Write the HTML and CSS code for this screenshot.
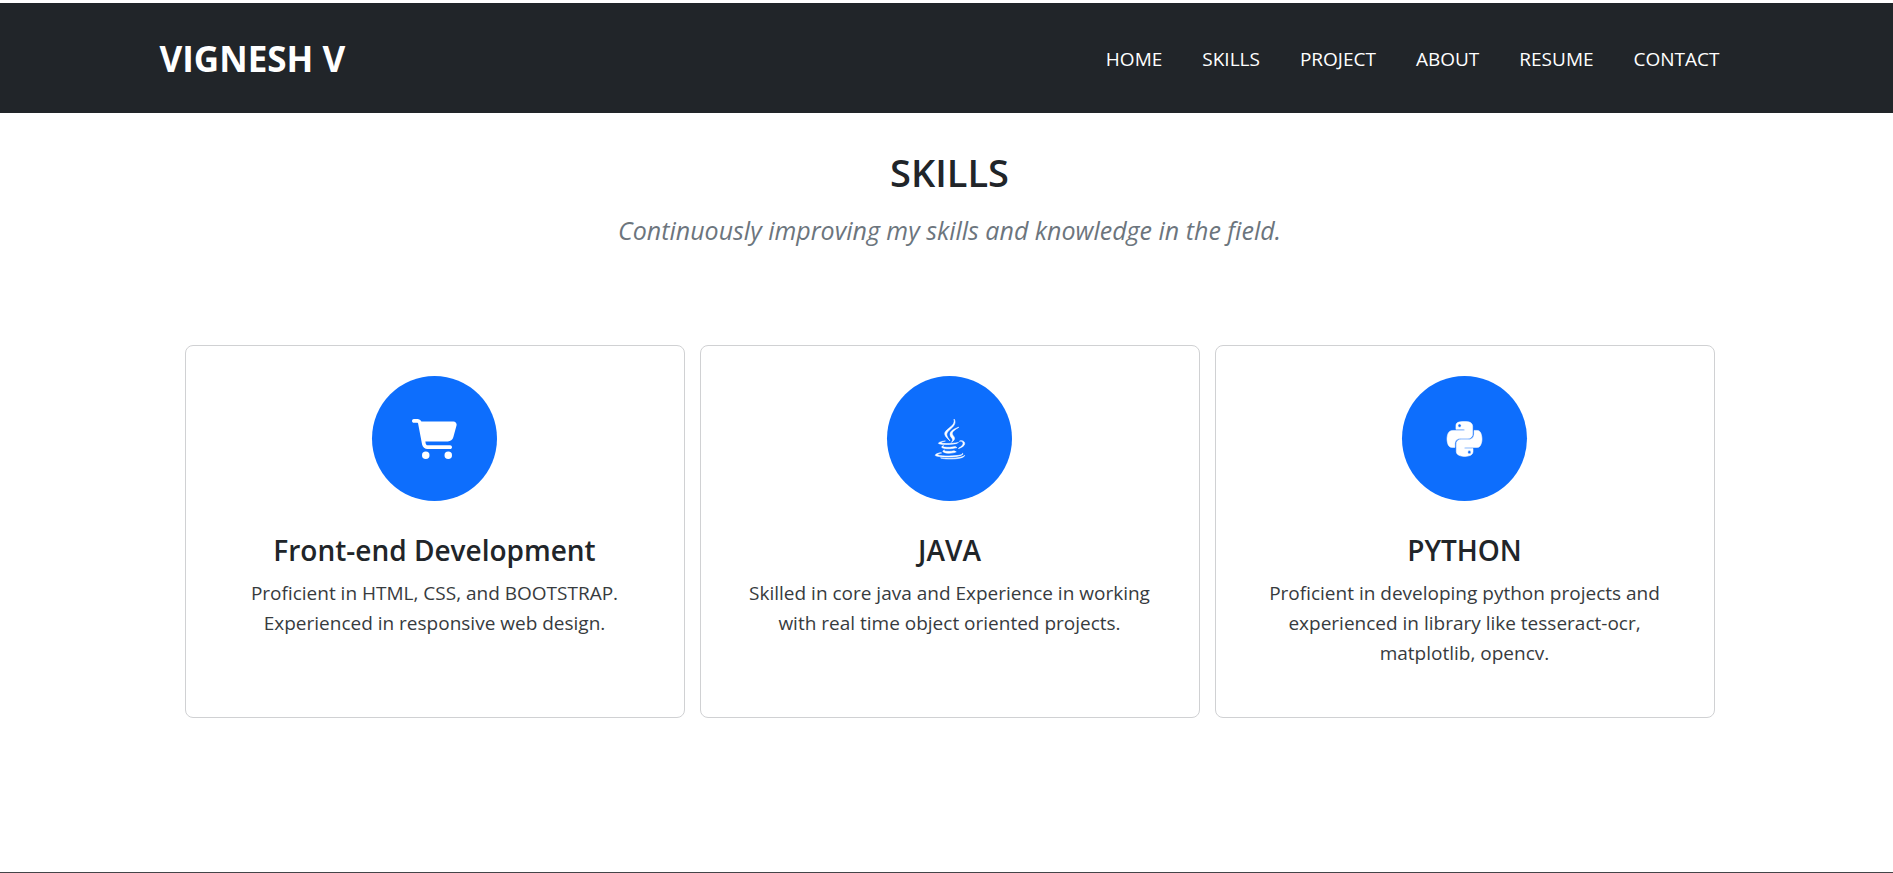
FILE: index.html
```html
<!DOCTYPE html>
<html lang="en">
<head>
  <meta charset="utf-8">
  <meta name="viewport" content="width=device-width, initial-scale=1">
  <title>Vignesh V</title>
  <link rel="stylesheet" href="styles.css">
</head>
<body>
  <header class="site-header">
    <div class="header-inner">
      <a class="brand" href="#home">VIGNESH V</a>
      <nav class="nav" aria-label="Main">
        <a href="#home">HOME</a>
        <a href="#skills">SKILLS</a>
        <a href="#project">PROJECT</a>
        <a href="#about">ABOUT</a>
        <a href="#resume">RESUME</a>
        <a href="#contact">CONTACT</a>
      </nav>
    </div>
  </header>
  <main class="skills" id="skills">
    <h1 class="skills-title">SKILLS</h1>
    <p class="skills-lead">Continuously improving my skills and knowledge in the field.</p>
    <div class="cards">
      <article class="card">
        <div class="badge">
          <svg class="icon" viewBox="0 0 576 512" aria-hidden="true"><path d="M0 24C0 10.700 10.700 0 24 0H69.500c22 0 41.500 12.800 50.600 32h411c26.300 0 45.500 25 38.600 50.400l-41 152.300c-8.500 31.400-37 53.300-69.500 53.300H170.700l5.400 28.500c2.200 11.300 12.100 19.500 23.600 19.500H488c13.300 0 24 10.700 24 24s-10.700 24-24 24H199.700c-34.600 0-64.300-24.600-70.700-58.500L77.400 54.500c-.7-3.800-4-6.500-7.900-6.500H24C10.700 48 0 37.300 0 24zM128 464a48 48 0 1 1 96 0 48 48 0 1 1-96 0zm336-48a48 48 0 1 1 0 96 48 48 0 1 1 0-96z"/></svg>
        </div>
        <h2 class="card-title">Front-end Development</h2>
        <p class="card-text">Proficient in HTML, CSS, and BOOTSTRAP. Experienced in responsive web design.</p>
      </article>
      <article class="card">
        <div class="badge">
          <svg class="icon icon-bold" viewBox="0 0 384 512" aria-hidden="true"><path d="M277.740 312.900c9.800-6.700 23.400-12.500 23.400-12.500s-38.700 7-77.200 10.200c-47.100 3.900-97.700 4.700-123.100 1.300-60.100-8 33-30.100 33-30.100s-36.100-2.400-80.600 19c-52.500 25.400 130 37 224.500 12.100zm-85.400-32.100c-19-42.700-83.100-80.200 0-145.800C296 53.200 242.840 0 242.840 0c21.500 84.500-75.600 110.100-110.700 162.600-23.900 35.900 11.700 74.400 60.200 118.200zm114.600-176.200c.1 0-175.200 43.800-91.500 140.200 24.700 28.400-6.500 54-6.500 54s62.700-32.400 33.900-72.900c-26.900-37.800-47.500-56.600 64.100-121.300zm-6.100 270.500a12.190 12.190 0 0 1-2 2.600c128.300-33.700 81.100-118.900 19.800-97.300a17.330 17.330 0 0 0-8.200 6.300 70.450 70.450 0 0 1 11-3c31-6.500 75.500 41.500-20.600 91.400zM348 437.400s14.500 11.900-15.900 21.200c-57.900 17.500-240.800 22.800-291.600.7-18.300-7.900 16-19 26.800-21.300 11.200-2.400 17.700-2 17.700-2-20.300-14.300-131.300 28.100-56.400 40.200C232.840 509.400 401 461.300 348 437.400zM124.440 396c-78.700 22 47.900 67.400 148.100 24.500a185.890 185.890 0 0 1-28.200-13.800c-44.700 8.500-65.400 9.100-106 4.500-33.500-3.800-13.900-15.200-13.900-15.200zm179.800 97.200c-78.700 14.800-175.800 13.100-233.300 3.600 0-.1 11.800 9.700 72.400 13.600 92.200 5.900 233.800-3.300 237.100-46.900 0 0-6.400 16.500-76.200 29.700zM260.640 353c-59.200 11.400-93.500 11.100-136.800 6.600-33.500-3.500-11.600-19.700-11.600-19.700-86.800 28.800 48.200 61.400 169.500 25.900a60.370 60.370 0 0 1-21.100-12.800z"/></svg>
        </div>
        <h2 class="card-title">JAVA</h2>
        <p class="card-text">Skilled in core java and Experience in working with real time object oriented projects.</p>
      </article>
      <article class="card">
        <div class="badge">
          <svg class="icon icon-bold" viewBox="0 0 448 512" aria-hidden="true"><path d="M439.800 200.500c-7.700-30.900-22.300-54.200-53.400-54.200h-40.100v47.400c0 36.800-31.200 67.800-66.800 67.800H172.700c-29.200 0-53.400 25-53.400 54.300v101.800c0 29 25.200 46 53.400 54.300 33.800 9.900 66.300 11.700 106.800 0 26.900-7.800 53.400-23.500 53.400-54.300v-40.700H226.200v-13.600h160.200c31.100 0 42.600-21.700 53.400-54.200 11.200-33.500 10.700-65.700 0-108.600zM286.200 404c11.100 0 20.100 9.100 20.100 20.300 0 11.300-9 20.400-20.100 20.400-11 0-20.100-9.200-20.100-20.400.1-11.300 9.100-20.300 20.100-20.300zM167.800 248.100h106.800c29.700 0 53.400-24.500 53.400-54.300V91.900c0-29-24.400-50.700-53.400-55.600-35.800-5.900-74.700-5.600-106.800.1-45.200 8-53.400 24.700-53.400 55.600v40.700h106.900v13.600h-147c-31.100 0-58.300 18.700-66.800 54.200-9.800 40.700-10.200 66.100 0 108.600 7.600 31.600 25.700 54.200 56.800 54.200H101v-48.800c0-35.300 30.500-66.400 66.800-66.400zm-6.700-142.600c-11.100 0-20.100-9.100-20.100-20.300.1-11.300 9-20.400 20.100-20.400 11 0 20.100 9.200 20.100 20.400s-9 20.300-20.100 20.300z"/></svg>
        </div>
        <h2 class="card-title">PYTHON</h2>
        <p class="card-text">Proficient in developing python projects and experienced in library like tesseract-ocr, matplotlib, opencv.</p>
      </article>
    </div>
  </main>
</body>
</html>
```
FILE: styles.css
```css
* {
  box-sizing: border-box;
}

body {
  margin: 0;
  background: #fff;
  color: #212529;
  font-family: "Segoe UI", "Open Sans", "Noto Sans", sans-serif;
  font-size: 19px;
  line-height: 30px;
}

h1, h2, p {
  margin: 0;
}

.site-header {
  margin-top: 3px;
  padding: 31px 30px 29px 16px;
  background: #212529;
}

.header-inner {
  display: flex;
  flex-wrap: wrap;
  align-items: center;
  justify-content: space-between;
  max-width: 1560px;
  margin: 0 auto;
}

.brand {
  color: #fff;
  font-size: 35px;
  font-weight: 700;
  line-height: 50px;
  text-decoration: none;
}

.nav {
  display: flex;
  flex-wrap: wrap;
  gap: 8px 40px;
}

.nav a {
  color: #fff;
  text-decoration: none;
}

.skills {
  padding: 34px 16px 154px 22px;
  border-bottom: 1px solid #444448;
  text-align: center;
}

.skills-title {
  font-size: 38px;
  font-weight: 600;
  line-height: 50px;
}

.skills-lead {
  margin-top: 14px;
  color: #6c757d;
  font-size: 25px;
  font-style: italic;
  line-height: 38px;
}

.cards {
  display: grid;
  grid-template-columns: repeat(auto-fit, minmax(320px, 1fr));
  gap: 15px;
  max-width: 1530px;
  margin: 96px auto 0;
}

.card {
  padding: 30px 48px 49px;
  border: 1px solid #d0d1d3;
  border-radius: 8px;
}

.badge {
  display: flex;
  align-items: center;
  justify-content: center;
  width: 125px;
  height: 125px;
  margin: 0 auto 31px;
  border-radius: 50%;
  background: #0d6efd;
}

.icon {
  height: 40px;
  fill: #fff;
}

.icon-bold {
  overflow: visible;
  stroke: #fff;
  stroke-width: 7;
}

.card-title {
  font-size: 28px;
  font-weight: 600;
  line-height: 36px;
}

.card-text {
  margin-top: 10px;
  color: #373b3e;
}
```
